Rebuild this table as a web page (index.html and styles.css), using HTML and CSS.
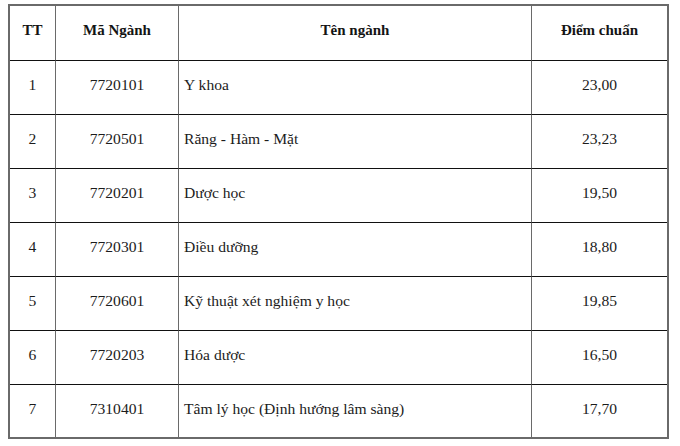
FILE: index.html
```html
<!DOCTYPE html>
<html lang="vi">
<head>
<meta charset="utf-8">
<title>Điểm chuẩn</title>
<link rel="stylesheet" href="styles.css">
</head>
<body>
<table class="scores">
  <colgroup>
    <col class="c-tt">
    <col class="c-ma">
    <col class="c-ten">
    <col class="c-diem">
  </colgroup>
  <thead>
    <tr class="head-row">
      <th class="center">TT</th>
      <th class="center">Mã Ngành</th>
      <th class="center">Tên ngành</th>
      <th class="center last-col">Điểm chuẩn</th>
    </tr>
  </thead>
  <tbody>
    <tr class="row">
      <td class="center">1</td>
      <td class="center">7720101</td>
      <td class="name">Y khoa</td>
      <td class="center last-col">23,00</td>
    </tr>
    <tr class="row">
      <td class="center">2</td>
      <td class="center">7720501</td>
      <td class="name">Răng - Hàm - Mặt</td>
      <td class="center last-col">23,23</td>
    </tr>
    <tr class="row">
      <td class="center">3</td>
      <td class="center">7720201</td>
      <td class="name">Dược học</td>
      <td class="center last-col">19,50</td>
    </tr>
    <tr class="row">
      <td class="center">4</td>
      <td class="center">7720301</td>
      <td class="name">Điều dưỡng</td>
      <td class="center last-col">18,80</td>
    </tr>
    <tr class="row">
      <td class="center">5</td>
      <td class="center">7720601</td>
      <td class="name">Kỹ thuật xét nghiệm y học</td>
      <td class="center last-col">19,85</td>
    </tr>
    <tr class="row">
      <td class="center">6</td>
      <td class="center">7720203</td>
      <td class="name">Hóa dược</td>
      <td class="center last-col">16,50</td>
    </tr>
    <tr class="row last-row">
      <td class="center">7</td>
      <td class="center">7310401</td>
      <td class="name">Tâm lý học (Định hướng lâm sàng)</td>
      <td class="center last-col">17,70</td>
    </tr>
  </tbody>
</table>
</body>
</html>
```
FILE: styles.css
```css
html, body {
  margin: 0;
  padding: 0;
  background: #ffffff;
}

body {
  padding: 4px 0 0 8px;
  font-family: "Liberation Serif", "Times New Roman", serif;
  color: #1c1c1c;
}

.scores {
  width: 661px;
  table-layout: fixed;
  border-collapse: separate;
  border-spacing: 0;
  border: 2px solid #6a6a6a;
  font-size: 15.6px;
}

.c-tt { width: 46px; }
.c-ma { width: 123px; }
.c-ten { width: 353px; }
.c-diem { width: 135px; }

.scores th,
.scores td {
  padding: 0 0 5px 0;
  border-right: 1px solid #6a6a6a;
  border-bottom: 1px solid #111111;
  vertical-align: middle;
  box-sizing: border-box;
}

.scores th {
  font-weight: bold;
  font-size: 15px;
  color: #141414;
}

.scores .last-col {
  border-right: none;
}

.head-row {
  height: 55px;
}

.row {
  height: 54px;
}

.last-row {
  height: 52px;
}

.last-row td {
  border-bottom: none;
}

.center {
  text-align: center;
}

.name {
  text-align: left;
  padding-left: 5px !important;
}
```
